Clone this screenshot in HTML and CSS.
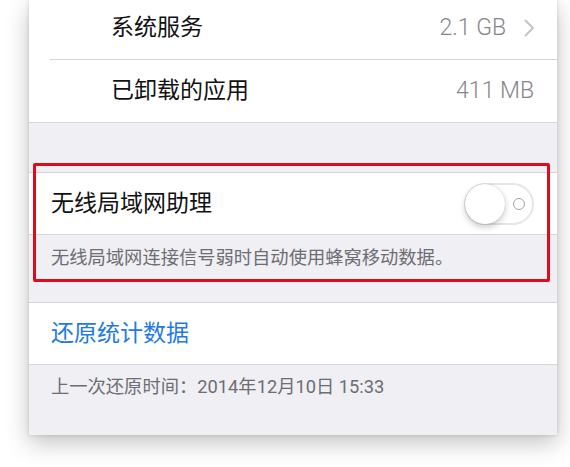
FILE: index.html
```html
<!DOCTYPE html>
<html lang="zh-CN">
<head>
<meta charset="utf-8">
<title>使用情况</title>
<link rel="stylesheet" href="styles.css">
</head>
<body>
<div class="card">
  <div class="group group-first">
    <div class="sublist">
      <div class="row row-sub row-top">
        <span class="label">系统服务</span>
        <span class="value">2.1 GB</span>
        <svg class="chevron" width="11" height="18" viewBox="0 0 11 18"><polyline points="1.5,1.5 9,9 1.5,16.5" fill="none" stroke="#c4c4c9" stroke-width="2" stroke-linecap="round" stroke-linejoin="round"/></svg>
      </div>
      <div class="row row-sub row-last">
        <span class="label">已卸载的应用</span>
        <span class="value">411 MB</span>
      </div>
    </div>
  </div>
  <div class="spacer"></div>
  <div class="group">
    <div class="row">
      <span class="label">无线局域网助理</span>
      <div class="switch">
        <span class="knob"></span>
        <span class="ring"></span>
      </div>
    </div>
  </div>
  <div class="footer footer-a">无线局域网连接信号弱时自动使用蜂窝移动数据。</div>
  <div class="group">
    <div class="row">
      <span class="label link">还原统计数据</span>
    </div>
  </div>
  <div class="footer footer-b">上一次还原时间：2014年12月10日 15:33</div>
  <div class="highlight"></div>
</div>
</body>
</html>
```

FILE: styles.css
```css
html, body {
  margin: 0;
  padding: 0;
  background: #ffffff;
}
body {
  width: 570px;
  height: 467px;
  overflow: hidden;
  font-family: "Roboto", "Noto Sans CJK SC", sans-serif;
}
.card {
  position: relative;
  margin-left: 29px;
  width: 528px;
  height: 435px;
  background: #efeff4;
  box-shadow: 0 8px 22px rgba(0, 0, 0, 0.24), 0 0 4px rgba(0, 0, 0, 0.14);
}
.group {
  background: #ffffff;
  border-top: 1px solid #d6d6da;
  border-bottom: 1px solid #d6d6da;
}
.group-first {
  border-top: 0;
}
.sublist {
  padding-left: 21px;
}
.row {
  display: flex;
  align-items: center;
  height: 61px;
  padding: 0 23px 0 22px;
}
.row-sub {
  padding-left: 61px;
  padding-right: 23px;
  height: 62px;
}
.row-top {
  height: 56px;
  padding-bottom: 3px;
  border-bottom: 1px solid #d6d6da;
  padding-right: 22px;
}
.label {
  flex: 1;
  font-size: 23px;
  line-height: 30px;
  color: #111111;
}
.link {
  color: #1f7ae4;
}
.value {
  font-size: 23px;
  font-weight: 300;
  line-height: 30px;
  color: #86868b;
}
.chevron {
  margin-left: 18px;
  display: block;
}
.spacer {
  height: 49px;
}
.switch {
  display: flex;
  align-items: center;
  justify-content: space-between;
  width: 70px;
  height: 42px;
  border-radius: 21px;
  background: #ffffff;
  box-shadow: inset 0 0 0 2px #e6e6ea;
  box-sizing: border-box;
}
.knob {
  width: 40px;
  height: 40px;
  margin-left: 1px;
  border-radius: 50%;
  background: #ffffff;
  box-shadow: 0 3px 6px rgba(0, 0, 0, 0.22), 0 0 1px rgba(0, 0, 0, 0.25);
}
.ring {
  width: 10px;
  height: 10px;
  margin-right: 9px;
  border-radius: 50%;
  border: 1.5px solid #a4a4aa;
}
.footer {
  font-size: 18.3px;
  line-height: 24px;
  color: #6d6d72;
  padding-left: 22px;
  box-sizing: border-box;
}
.footer-a {
  height: 67px;
  padding-top: 11px;
}
.footer-b {
  height: 70px;
  padding-top: 10px;
}
.highlight {
  position: absolute;
  left: 4px;
  top: 163px;
  width: 517px;
  height: 119px;
  box-sizing: border-box;
  border: 3px solid #e2091c;
  border-radius: 2px;
  pointer-events: none;
}
```
